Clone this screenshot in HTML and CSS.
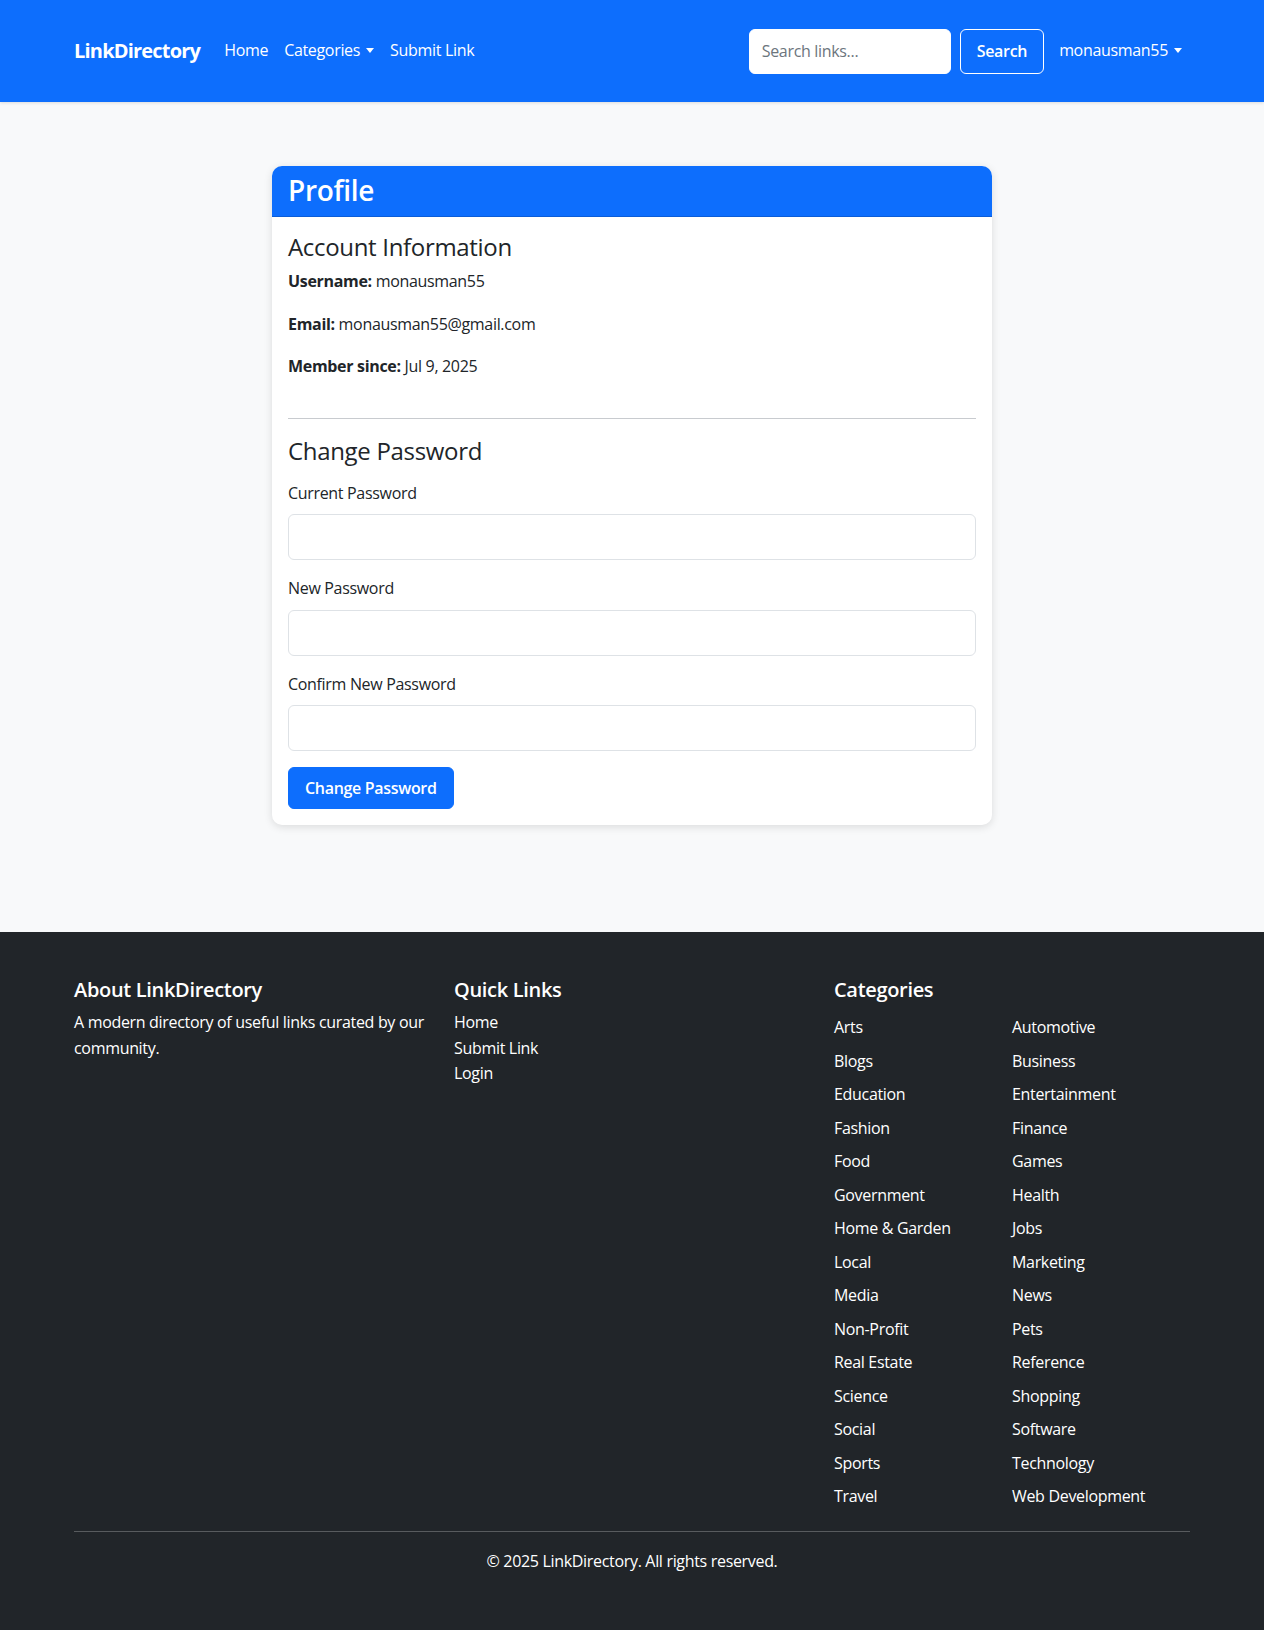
FILE: index.html
```html
<!DOCTYPE html>
<html lang="en">
<head>
  <meta charset="UTF-8" />
  <meta name="viewport" content="width=device-width, initial-scale=1.0">
  <title>Profile - LinkDirectory</title>
  <link rel="stylesheet" href="styles.css">
</head>
<body>
  <nav class="navbar">
    <div class="container nav-inner">
      <a class="brand" href="#">LinkDirectory</a>
      <ul class="nav-links">
        <li><a href="#">Home</a></li>
        <li><a href="#" class="dropdown">Categories</a></li>
        <li><a href="#">Submit Link</a></li>
      </ul>
      <form class="search-form">
        <input type="text" placeholder="Search links...">
        <button type="button">Search</button>
      </form>
      <a href="#" class="user-link dropdown">monausman55</a>
    </div>
  </nav>

  <main>
    <div class="card">
      <div class="card-header">
        <h3>Profile</h3>
      </div>
      <div class="card-body">
        <div class="account-info">
          <h4>Account Information</h4>
          <p><strong>Username:</strong> monausman55</p>
          <p><strong>Email:</strong> monausman55@gmail.com</p>
          <p><strong>Member since:</strong> Jul 9, 2025</p>
        </div>

        <hr class="divider">

        <h4 class="pw-title">Change Password</h4>
        <form>
          <div class="field">
            <label for="current">Current Password</label>
            <input type="password" id="current">
          </div>
          <div class="field">
            <label for="newpw">New Password</label>
            <input type="password" id="newpw">
          </div>
          <div class="field">
            <label for="confirm">Confirm New Password</label>
            <input type="password" id="confirm">
          </div>
          <button type="button" class="btn-primary">Change Password</button>
        </form>
      </div>
    </div>
  </main>

  <footer>
    <div class="container">
      <div class="footer-row">
        <div class="footer-col">
          <h5>About LinkDirectory</h5>
          <p>A modern directory of useful links curated by our community.</p>
        </div>
        <div class="footer-col">
          <h5>Quick Links</h5>
          <ul class="quick-links">
            <li><a href="#">Home</a></li>
            <li><a href="#">Submit Link</a></li>
            <li><a href="#">Login</a></li>
          </ul>
        </div>
        <div class="footer-col">
          <h5>Categories</h5>
          <ul class="cat-list">
            <li><a href="#">Arts</a></li>
            <li><a href="#">Automotive</a></li>
            <li><a href="#">Blogs</a></li>
            <li><a href="#">Business</a></li>
            <li><a href="#">Education</a></li>
            <li><a href="#">Entertainment</a></li>
            <li><a href="#">Fashion</a></li>
            <li><a href="#">Finance</a></li>
            <li><a href="#">Food</a></li>
            <li><a href="#">Games</a></li>
            <li><a href="#">Government</a></li>
            <li><a href="#">Health</a></li>
            <li><a href="#">Home &amp; Garden</a></li>
            <li><a href="#">Jobs</a></li>
            <li><a href="#">Local</a></li>
            <li><a href="#">Marketing</a></li>
            <li><a href="#">Media</a></li>
            <li><a href="#">News</a></li>
            <li><a href="#">Non-Profit</a></li>
            <li><a href="#">Pets</a></li>
            <li><a href="#">Real Estate</a></li>
            <li><a href="#">Reference</a></li>
            <li><a href="#">Science</a></li>
            <li><a href="#">Shopping</a></li>
            <li><a href="#">Social</a></li>
            <li><a href="#">Software</a></li>
            <li><a href="#">Sports</a></li>
            <li><a href="#">Technology</a></li>
            <li><a href="#">Travel</a></li>
            <li><a href="#">Web Development</a></li>
          </ul>
        </div>
      </div>
      <hr class="footer-rule">
      <p class="copyright">&copy; 2025 LinkDirectory. All rights reserved.</p>
    </div>
  </footer>
</body>
</html>
```

FILE: styles.css
```css
body {
  margin: 0;
  font-family: "Open Sans", "Noto Sans", sans-serif;
  font-size: 16px;
  line-height: 25.5px;
  letter-spacing: -0.02em;
  color: #212529;
  background-color: #f8f9fa;
}

a {
  color: inherit;
  text-decoration: none;
}

.container {
  max-width: 1116px;
  margin: 0 auto;
  padding: 0 12px;
}

/* Navbar */
.navbar {
  background-color: #0d6efd;
  padding: 28.5px 0;
  box-shadow: 0 1px 3px rgba(0,0,0,0.12);
}
.nav-inner {
  display: flex;
  align-items: center;
  height: 45px;
}
.brand {
  color: #fff;
  font-size: 20px;
  font-weight: 700;
  letter-spacing: -0.04em;
  margin-right: 16px;
}
.nav-links {
  display: flex;
  list-style: none;
  margin: 0;
  padding: 0;
  flex: 1;
}
.nav-links a,
.user-link {
  display: block;
  color: #fff;
  padding: 0 8px;
}
.dropdown::after {
  content: "";
  display: inline-block;
  margin-left: 6px;
  vertical-align: 3px;
  border-top: 5px solid;
  border-left: 4px solid transparent;
  border-right: 4px solid transparent;
}
.search-form {
  display: flex;
  gap: 9px;
}
.search-form input {
  width: 202px;
  height: 45px;
  box-sizing: border-box;
  border: 1px solid #fff;
  border-radius: 6px;
  padding: 0 12px;
  font-family: inherit;
  font-size: 16px;
  letter-spacing: inherit;
}
.search-form input::placeholder {
  color: #6c757d;
}
.search-form button {
  height: 45px;
  padding: 0 16px;
  background: transparent;
  border: 1px solid #fff;
  border-radius: 6px;
  color: #fff;
  font-family: inherit;
  font-size: 16px;
  font-weight: 600;
  letter-spacing: inherit;
}
.user-link {
  margin-left: 7px;
}

/* Profile card */
main {
  padding: 64px 0 107px;
}
.card {
  width: 720px;
  margin: 0 auto;
  background: #fff;
  border-radius: 10px;
  box-shadow: 0 2px 8px rgba(0,0,0,0.12);
  overflow: hidden;
}
.card-header {
  background-color: #0d6efd;
  color: #fff;
  padding: 8px 16px;
  border-bottom: 1px solid rgba(0,0,0,0.15);
}
.card-header h3 {
  margin: 0;
  font-size: 28px;
  line-height: 33.6px;
  font-weight: 600;
}
.card-body {
  padding: 16px;
}
.card-body h4 {
  margin: 0 0 8px;
  font-size: 24px;
  line-height: 28.8px;
  font-weight: 500;
}
.card-body p {
  margin: 0 0 16.8px;
}
.card-body strong {
  font-weight: 700;
}
.account-info {
  padding-bottom: 22px;
}
.divider {
  border: 0;
  border-top: 1px solid #c8cbcf;
  margin: 0 0 18px;
}
.card-body .pw-title {
  margin-bottom: 14.5px;
}
.field {
  margin-bottom: 16px;
}
.field label {
  display: block;
  margin-bottom: 8px;
}
.field input {
  display: block;
  width: 100%;
  height: 46px;
  box-sizing: border-box;
  border: 1px solid #dee2e6;
  border-radius: 6px;
  padding: 0 12px;
  font-size: 16px;
}
.btn-primary {
  height: 42px;
  padding: 0 16px;
  background-color: #0d6efd;
  border: 1px solid #0d6efd;
  border-radius: 6px;
  color: #fff;
  font-family: inherit;
  font-size: 16px;
  font-weight: 600;
  letter-spacing: inherit;
}

/* Footer */
footer {
  background-color: #212529;
  color: #fff;
  padding: 46px 0 57px;
}
.footer-row {
  display: flex;
  margin: 0 -12px;
}
.footer-col {
  width: 380px;
  padding: 0 12px;
  box-sizing: border-box;
}
.footer-col h5 {
  margin: 0 0 8px;
  font-size: 20px;
  line-height: 24px;
  font-weight: 600;
}
.footer-col p {
  margin: 0;
}
.quick-links,
.cat-list {
  list-style: none;
  margin: 0;
  padding: 0;
}
.cat-list {
  display: grid;
  grid-template-columns: 1fr 1fr;
  padding-top: 5px;
}
.cat-list li {
  margin-bottom: 8px;
}
.footer-rule {
  border: 0;
  border-top: 1px solid rgba(255,255,255,0.25);
  margin: 13px 0 17px;
}
.copyright {
  margin: 0;
  text-align: center;
}
```
